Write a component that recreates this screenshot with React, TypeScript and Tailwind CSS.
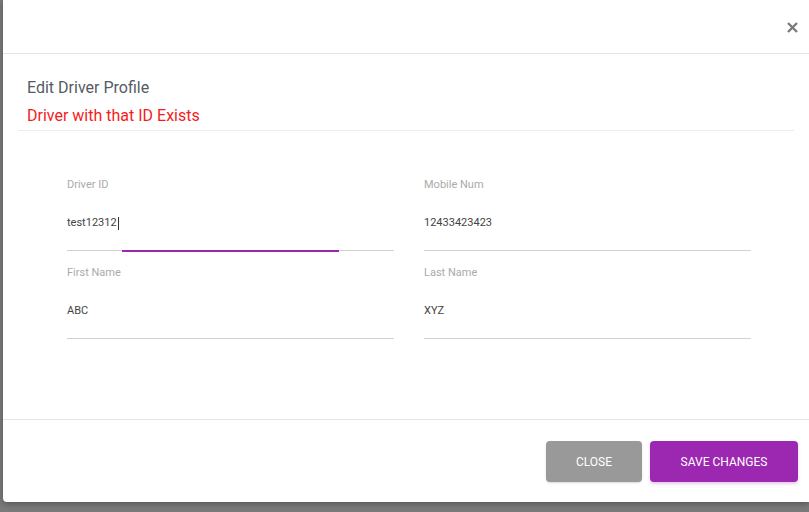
type FieldProps = {
  label: string;
  value: string;
  focused?: boolean;
};

function Field({ label, value, focused }: FieldProps) {
  return (
    <div className="flex flex-col">
      <label className="h-[22px] pt-[4px] text-[11px] leading-[16px] text-[#aaaaaa]">{label}</label>
      <div className="mt-[16px] flex h-[24px] items-center text-[11px] text-[#444]">
        <span>{value}</span>
        {focused && <span className="ml-px h-[13px] w-px bg-[#333]" />}
      </div>
      <div className="relative mt-[15px] h-px bg-[#d2d2d2]">
        {focused && <div className="absolute left-[55px] top-0 h-[2px] w-[217px] bg-[#9c27b0]" />}
      </div>
    </div>
  );
}

export default function App() {
  return (
    <div
      className="flex h-[512px] w-[809px] overflow-hidden bg-[#7a7a7a] pl-[3px]"
      style={{ fontFamily: "Roboto, 'Liberation Sans', sans-serif" }}
    >
      <div className="flex h-[502px] w-[806px] shrink-0 flex-col rounded-bl-[4px] bg-white shadow-[0_2px_6px_rgba(0,0,0,0.3)]">
        <div className="flex h-[54px] items-center justify-end border-b border-[#e5e5e5] pr-[11px]">
          <svg width="11" height="11" viewBox="0 0 11 11" className="mt-[1px]">
            <path d="M1 1L10 10M10 1L1 10" stroke="#7b7b7b" strokeWidth="2.4" />
          </svg>
        </div>

        <div className="px-[15px]">
          <div className="border-b border-[#ececec] pl-[9px] pt-[22px] pb-[2px]">
            <div className="text-[16px] leading-[24px] text-[#555b66]">Edit Driver Profile</div>
            <div className="mt-[4px] text-[16px] leading-[24px] text-[#f41c1c]">Driver with that ID Exists</div>
          </div>
        </div>

        <div className="grid grid-cols-[327px_327px] gap-x-[30px] gap-y-[10px] pl-[64px] pt-[42px]">
          <Field label="Driver ID" value="test12312" focused />
          <Field label="Mobile Num" value="12433423423" />
          <Field label="First Name" value="ABC" />
          <Field label="Last Name" value="XYZ" />
        </div>

        <div className="mt-auto flex items-start justify-end gap-[8px] border-t border-[#e5e5e5] pr-[11px] pt-[21px] pb-[20px]">
          <button
            type="button"
            className="h-[41px] w-[96px] rounded-[4px] bg-[#999999] text-[12px] uppercase text-white shadow-[0_1px_2px_rgba(0,0,0,0.15)]"
          >
            Close
          </button>
          <button
            type="button"
            className="h-[41px] w-[148px] rounded-[4px] bg-[#9c27b0] text-[12px] uppercase text-white shadow-[0_2px_3px_rgba(156,39,176,0.25)]"
          >
            Save Changes
          </button>
        </div>
      </div>
    </div>
  );
}
